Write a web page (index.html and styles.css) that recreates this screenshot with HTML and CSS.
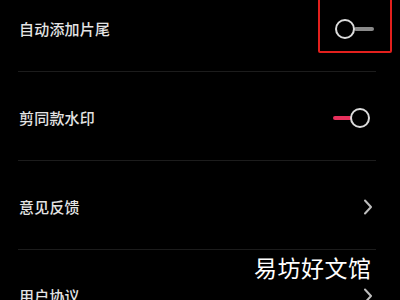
FILE: index.html
```html
<!DOCTYPE html>
<html lang="zh">
<head>
<meta charset="utf-8">
<link rel="stylesheet" href="styles.css">
</head>
<body>
<div class="screen">
  <ul class="list">
    <li class="row">
      <span class="label">自动添加片尾</span>
      <svg class="toggle" width="44" height="24" viewBox="0 0 44 24">
        <line x1="26" y1="12" x2="42" y2="12" stroke="#8a8a8a" stroke-width="4" stroke-linecap="round"/>
        <circle cx="15" cy="12" r="9" fill="none" stroke="#dcdcdc" stroke-width="2"/>
      </svg>
    </li>
    <li class="row">
      <span class="label">剪同款水印</span>
      <svg class="toggle" width="44" height="24" viewBox="0 0 44 24">
        <line x1="5" y1="12" x2="20" y2="12" stroke="#e8305c" stroke-width="4" stroke-linecap="round"/>
        <circle cx="30" cy="12" r="9" fill="none" stroke="#dcdcdc" stroke-width="2"/>
      </svg>
    </li>
    <li class="row">
      <span class="label">意见反馈</span>
      <svg class="chev" width="10" height="16" viewBox="0 0 10 16">
        <path d="M2 1.5 L8 8 L2 14.5" fill="none" stroke="#bdbdbd" stroke-width="2" stroke-linecap="round" stroke-linejoin="round"/>
      </svg>
    </li>
    <li class="row">
      <span class="label">用户协议</span>
      <svg class="chev" width="10" height="16" viewBox="0 0 10 16">
        <path d="M2 1.5 L8 8 L2 14.5" fill="none" stroke="#bdbdbd" stroke-width="2" stroke-linecap="round" stroke-linejoin="round"/>
      </svg>
    </li>
  </ul>
  <div class="highlight"></div>
  <div class="watermark">易坊好文馆</div>
</div>
</body>
</html>
```
FILE: styles.css
```css
html, body {
  margin: 0;
  padding: 0;
  background: #000;
}
.screen {
  position: relative;
  width: 400px;
  height: 300px;
  overflow: hidden;
  background: #000;
  font-family: "Noto Sans CJK SC", "Noto Sans", sans-serif;
}
.list {
  list-style: none;
  margin: -17px 24px 0 18px;
  padding: 0;
}
.row {
  display: flex;
  align-items: center;
  justify-content: space-between;
  height: 85px;
  padding: 3px 2px 0 1px;
  border-bottom: 1px solid #1c1c1c;
}
.label {
  color: #e4e4e4;
  font-size: 15px;
  font-weight: 500;
  letter-spacing: 0.2px;
}
.toggle, .chev {
  display: block;
}
.chev {
  margin-right: 1px;
}
.highlight {
  position: absolute;
  left: 318px;
  top: -10px;
  width: 70px;
  height: 59px;
  border: 2px solid #e3201d;
  border-radius: 2px;
}
.watermark {
  position: absolute;
  left: 254px;
  top: 252px;
  color: #fff;
  font-size: 23px;
  line-height: 30px;
  letter-spacing: 0.5px;
  text-shadow: 0 0 2px rgba(0,0,0,0.8);
}
```
